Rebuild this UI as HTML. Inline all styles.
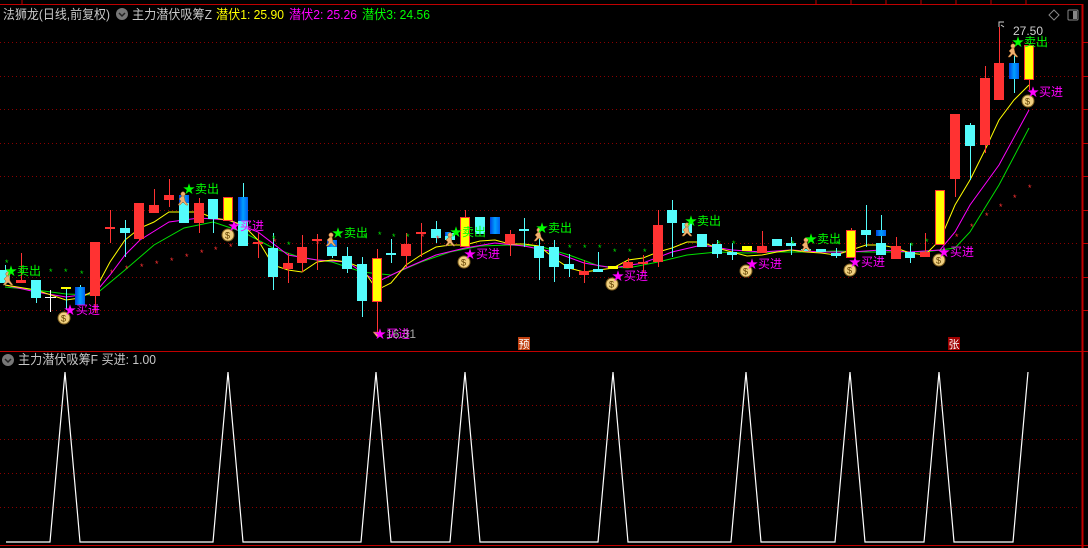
<!DOCTYPE html>
<html><head><meta charset="utf-8"><style>
html,body{margin:0;padding:0;background:#000;width:1088px;height:548px;overflow:hidden}
svg{display:block}
text{font-family:"Liberation Sans","Noto Sans CJK SC",sans-serif}
</style></head><body>
<svg width="1088" height="548" viewBox="0 0 1088 548" xmlns="http://www.w3.org/2000/svg">
<defs>
<linearGradient id="bl" x1="0" x2="1" y1="0" y2="0"><stop offset="0" stop-color="#0040e0"/><stop offset="0.5" stop-color="#00a0ff"/><stop offset="1" stop-color="#0060f0"/></linearGradient>
</defs>
<rect width="1088" height="548" fill="#000"/>
<line x1="0" y1="4.5" x2="1082" y2="4.5" stroke="#c00000" stroke-width="1"/>
<line x1="1082.5" y1="4" x2="1082.5" y2="548" stroke="#c00000" stroke-width="2"/>
<line x1="0" y1="351.5" x2="1088" y2="351.5" stroke="#c00000" stroke-width="1"/>
<line x1="0" y1="545.5" x2="1088" y2="545.5" stroke="#c00000" stroke-width="1"/>
<g stroke="#c00000" stroke-width="1">
<line x1="816" y1="0" x2="816" y2="4"/><line x1="851" y1="0" x2="851" y2="4"/><line x1="886" y1="0" x2="886" y2="4"/><line x1="921" y1="0" x2="921" y2="4"/><line x1="956" y1="0" x2="956" y2="4"/><line x1="991" y1="0" x2="991" y2="4"/><line x1="1026" y1="0" x2="1026" y2="4"/><line x1="22" y1="0" x2="22" y2="4"/>
</g>
<g stroke="#8a0000" stroke-width="1" stroke-dasharray="1,3">
<line x1="0" y1="42.5" x2="1080" y2="42.5"/><line x1="0" y1="76.5" x2="1080" y2="76.5"/><line x1="0" y1="109.5" x2="1080" y2="109.5"/><line x1="0" y1="143.5" x2="1080" y2="143.5"/><line x1="0" y1="176.5" x2="1080" y2="176.5"/><line x1="0" y1="210.5" x2="1080" y2="210.5"/><line x1="0" y1="243.5" x2="1080" y2="243.5"/><line x1="0" y1="277.5" x2="1080" y2="277.5"/><line x1="0" y1="310.5" x2="1080" y2="310.5"/>
<line x1="0" y1="405.5" x2="1080" y2="405.5"/><line x1="0" y1="439.5" x2="1080" y2="439.5"/><line x1="0" y1="473.5" x2="1080" y2="473.5"/><line x1="0" y1="507.5" x2="1080" y2="507.5"/>
</g>
<g stroke="#c00000" stroke-width="1">
<line x1="1082" y1="42.5" x2="1088" y2="42.5"/><line x1="1082" y1="76.5" x2="1088" y2="76.5"/><line x1="1082" y1="109.5" x2="1088" y2="109.5"/><line x1="1082" y1="143.5" x2="1088" y2="143.5"/><line x1="1082" y1="176.5" x2="1088" y2="176.5"/><line x1="1082" y1="210.5" x2="1088" y2="210.5"/><line x1="1082" y1="243.5" x2="1088" y2="243.5"/><line x1="1082" y1="277.5" x2="1088" y2="277.5"/><line x1="1082" y1="310.5" x2="1088" y2="310.5"/>
</g>
<text x="3" y="19" font-size="13" fill="#c8c8c8" textLength="107" lengthAdjust="spacingAndGlyphs">法狮龙(日线,前复权)</text>
<circle cx="122" cy="14" r="6" fill="#777"/><path d="M119 13 l3 3 l3 -3" stroke="#222" stroke-width="1.5" fill="none"/>
<text x="132" y="19" font-size="13" fill="#c8c8c8" textLength="80" lengthAdjust="spacingAndGlyphs">主力潜伏吸筹Z</text>
<text x="216" y="19" font-size="13" fill="#ffff00" textLength="68" lengthAdjust="spacingAndGlyphs">潜伏1: 25.90</text>
<text x="289" y="19" font-size="13" fill="#ff00ff" textLength="68" lengthAdjust="spacingAndGlyphs">潜伏2: 25.26</text>
<text x="362" y="19" font-size="13" fill="#00ff00" textLength="68" lengthAdjust="spacingAndGlyphs">潜伏3: 24.56</text>
<path d="M1054 10 l5 5 l-5 5 l-5 -5z" stroke="#888" fill="none"/>
<rect x="1068" y="10" width="10" height="10" rx="1" stroke="#888" fill="none"/><rect x="1073" y="11" width="4" height="8" fill="#888"/>
<polyline fill="none" stroke="#00e000" stroke-width="1" points="5,287 36,290 66,294 95,295 125,270 154,245 184,228 213,222 243,232 273,248 302,258 332,262 362,272 391,275 421,262 450,252 480,246 510,245 539,246 569,255 599,266 628,268 658,262 687,255 717,252 747,253 777,252 806,252 836,251 866,252 896,252 925,252 955,248 970,232 999,185 1029,128"/>
<polyline fill="none" stroke="#ff00ff" stroke-width="1" points="5,285 36,292 66,297 95,293 110,275 125,255 140,240 169,222 199,218 228,220 258,232 288,255 317,260 347,262 377,282 406,268 436,255 465,248 495,243 524,246 554,252 584,263 613,268 643,263 672,252 702,245 732,250 762,252 791,250 821,252 851,252 881,250 910,252 940,250 955,232 970,205 999,165 1029,110"/>
<polyline fill="none" stroke="#ffff00" stroke-width="1" points="5,285 36,290 66,300 80,298 95,290 110,262 125,240 140,228 154,222 169,212 184,212 199,212 213,218 228,220 243,225 258,240 273,265 288,270 302,272 317,262 332,260 347,262 362,268 377,290 391,283 406,265 421,255 436,247 450,245 465,245 480,241 495,240 510,244 524,244 539,246 554,258 569,268 584,272 599,270 613,268 628,260 643,258 658,252 672,248 687,242 702,242 717,248 732,252 747,256 762,255 777,252 791,250 806,252 821,253 836,255 851,250 866,245 881,245 896,248 910,253 925,255 940,240 955,205 970,180 985,150 999,120 1014,100 1029,85"/>
<g stroke-width="1">
<g stroke="#54fcfc">
<line x1="5.5" y1="265" x2="5.5" y2="285"/><line x1="36.5" y1="280" x2="36.5" y2="303"/><line x1="66.5" y1="287" x2="66.5" y2="310"/><line x1="80.5" y1="285" x2="80.5" y2="305"/>
<line x1="125.5" y1="220" x2="125.5" y2="257"/><line x1="184.5" y1="195" x2="184.5" y2="223"/><line x1="213.5" y1="199" x2="213.5" y2="233"/><line x1="243.5" y1="183" x2="243.5" y2="246"/>
<line x1="273.5" y1="233" x2="273.5" y2="290"/><line x1="332.5" y1="240" x2="332.5" y2="258"/><line x1="347.5" y1="247" x2="347.5" y2="273"/><line x1="362.5" y1="257" x2="362.5" y2="317"/>
<line x1="391.5" y1="239" x2="391.5" y2="263"/><line x1="436.5" y1="221" x2="436.5" y2="243"/><line x1="524.5" y1="218" x2="524.5" y2="247"/><line x1="539.5" y1="228" x2="539.5" y2="280"/>
<line x1="554.5" y1="240" x2="554.5" y2="282"/><line x1="569.5" y1="254" x2="569.5" y2="277"/><line x1="598.5" y1="252" x2="598.5" y2="272"/><line x1="672.5" y1="200" x2="672.5" y2="257"/>
<line x1="717.5" y1="240" x2="717.5" y2="258"/><line x1="732.5" y1="243" x2="732.5" y2="260"/><line x1="791.5" y1="237" x2="791.5" y2="255"/><line x1="836.5" y1="248" x2="836.5" y2="258"/>
<line x1="866.5" y1="205" x2="866.5" y2="247"/><line x1="881.5" y1="215" x2="881.5" y2="255"/><line x1="910.5" y1="243" x2="910.5" y2="263"/><line x1="970.5" y1="123" x2="970.5" y2="180"/><line x1="1014.5" y1="55" x2="1014.5" y2="93"/>
</g>
<g stroke="#ff3232">
<line x1="21.5" y1="253" x2="21.5" y2="283"/><line x1="95.5" y1="242" x2="95.5" y2="313"/><line x1="110.5" y1="210" x2="110.5" y2="243"/><line x1="139.5" y1="203" x2="139.5" y2="241"/>
<line x1="154.5" y1="189" x2="154.5" y2="213"/><line x1="169.5" y1="179" x2="169.5" y2="207"/><line x1="199.5" y1="198" x2="199.5" y2="233"/><line x1="258.5" y1="233" x2="258.5" y2="258"/>
<line x1="288.5" y1="253" x2="288.5" y2="283"/><line x1="302.5" y1="235" x2="302.5" y2="272"/><line x1="317.5" y1="234" x2="317.5" y2="270"/><line x1="377.5" y1="249" x2="377.5" y2="335"/>
<line x1="406.5" y1="233" x2="406.5" y2="267"/><line x1="421.5" y1="223" x2="421.5" y2="257"/><line x1="465.5" y1="210" x2="465.5" y2="247"/><line x1="510.5" y1="230" x2="510.5" y2="256"/>
<line x1="584.5" y1="260" x2="584.5" y2="283"/><line x1="628.5" y1="258" x2="628.5" y2="268"/><line x1="643.5" y1="255" x2="643.5" y2="272"/><line x1="658.5" y1="210" x2="658.5" y2="267"/>
<line x1="762.5" y1="231" x2="762.5" y2="253"/><line x1="851.5" y1="228" x2="851.5" y2="258"/><line x1="896.5" y1="237" x2="896.5" y2="259"/><line x1="925.5" y1="233" x2="925.5" y2="257"/>
<line x1="955.5" y1="114" x2="955.5" y2="197"/><line x1="985.5" y1="66" x2="985.5" y2="153"/><line x1="999.5" y1="27" x2="999.5" y2="100"/><line x1="1029.5" y1="45" x2="1029.5" y2="90"/>
</g>
<line x1="50.5" y1="290" x2="50.5" y2="312" stroke="#fff"/><line x1="45" y1="297.5" x2="56" y2="297.5" stroke="#fff"/>
</g>
<g fill="#54fcfc">
<rect x="0" y="270" width="10" height="13"/><rect x="31" y="280" width="10" height="18"/><rect x="120" y="228" width="10" height="5"/><rect x="179" y="200" width="10" height="23"/>
<rect x="208" y="199" width="10" height="20"/><rect x="238" y="221" width="10" height="25"/><rect x="268" y="248" width="10" height="29"/><rect x="327" y="247" width="10" height="9"/>
<rect x="342" y="256" width="10" height="13"/><rect x="357" y="264" width="10" height="37"/><rect x="386" y="253" width="10" height="2"/><rect x="431" y="229" width="10" height="9"/>
<rect x="445" y="233" width="10" height="7"/><rect x="475" y="217" width="10" height="17"/><rect x="519" y="229" width="10" height="2"/><rect x="534" y="246" width="10" height="12"/>
<rect x="549" y="247" width="10" height="20"/><rect x="564" y="264" width="10" height="5"/><rect x="593" y="269" width="10" height="3"/><rect x="667" y="210" width="10" height="13"/>
<rect x="682" y="223" width="10" height="10"/><rect x="697" y="234" width="10" height="13"/><rect x="712" y="244" width="10" height="10"/><rect x="727" y="252" width="10" height="3"/>
<rect x="772" y="239" width="10" height="7"/><rect x="786" y="243" width="10" height="3"/><rect x="801" y="249" width="10" height="2"/><rect x="816" y="249" width="10" height="3"/>
<rect x="831" y="253" width="10" height="3"/><rect x="861" y="230" width="10" height="5"/><rect x="876" y="243" width="10" height="12"/><rect x="905" y="252" width="10" height="6"/>
<rect x="965" y="125" width="10" height="21"/>
</g>
<g fill="#ff3232">
<rect x="16" y="280" width="10" height="3"/><rect x="90" y="242" width="10" height="54"/><rect x="105" y="227" width="10" height="2"/><rect x="134" y="203" width="10" height="36"/>
<rect x="149" y="205" width="10" height="8"/><rect x="164" y="195" width="10" height="5"/><rect x="194" y="203" width="10" height="20"/><rect x="253" y="242" width="10" height="2"/>
<rect x="283" y="263" width="10" height="6"/><rect x="297" y="247" width="10" height="16"/><rect x="312" y="239" width="10" height="2"/><rect x="401" y="244" width="10" height="12"/>
<rect x="416" y="232" width="10" height="2"/><rect x="505" y="234" width="10" height="10"/><rect x="579" y="271" width="10" height="4"/><rect x="623" y="262" width="10" height="6"/>
<rect x="638" y="262" width="10" height="2"/><rect x="653" y="225" width="10" height="37"/><rect x="757" y="246" width="10" height="7"/><rect x="891" y="246" width="10" height="13"/>
<rect x="920" y="252" width="10" height="5"/><rect x="950" y="114" width="10" height="65"/><rect x="980" y="78" width="10" height="67"/><rect x="994" y="63" width="10" height="37"/>
</g>
<g fill="#ffff00">
<rect x="61" y="287" width="10" height="2"/><rect x="608" y="266" width="10" height="3"/><rect x="742" y="246" width="10" height="5"/>
</g>
<g fill="#ffff00" stroke="#ff3232" stroke-width="1">
<rect x="223.5" y="197.5" width="9" height="23"/><rect x="372.5" y="258.5" width="9" height="43"/><rect x="460.5" y="217.5" width="9" height="29"/>
<rect x="846.5" y="230.5" width="9" height="27"/><rect x="935.5" y="190.5" width="9" height="54"/><rect x="1024.5" y="45.5" width="9" height="34"/>
</g>
<g fill="url(#bl)">
<rect x="75" y="287" width="10" height="18"/><rect x="179" y="195" width="10" height="8"/><rect x="238" y="197" width="10" height="24"/><rect x="490" y="217" width="10" height="17"/>
<rect x="876" y="230" width="10" height="6"/><rect x="1009" y="63" width="10" height="16"/><rect x="327" y="240" width="10" height="7"/><rect x="445" y="232" width="6" height="4"/>
</g>
<g font-size="9" fill="#00e000">
<text x="5" y="266">*</text><text x="20" y="276">*</text><text x="49" y="275">*</text><text x="64" y="275">*</text><text x="80" y="277">*</text>
<text x="272" y="242">*</text><text x="287" y="248">*</text><text x="363" y="240">*</text><text x="378" y="238">*</text><text x="392" y="240">*</text><text x="406" y="240">*</text>
<text x="568" y="251">*</text><text x="583" y="251">*</text><text x="598" y="251">*</text><text x="613" y="255">*</text><text x="628" y="255">*</text><text x="643" y="255">*</text>
<text x="717" y="247">*</text><text x="732" y="247">*</text><text x="791" y="247">*</text><text x="836" y="247">*</text><text x="910" y="249">*</text><text x="925" y="245">*</text>
</g>
<g font-size="9" fill="#ff3232">
<text x="95" y="285">*</text><text x="110" y="276">*</text><text x="125" y="272">*</text><text x="140" y="270">*</text><text x="155" y="267">*</text><text x="170" y="264">*</text><text x="185" y="260">*</text><text x="200" y="256">*</text><text x="214" y="253">*</text><text x="229" y="250">*</text>
<text x="258" y="248">*</text><text x="273" y="245">*</text><text x="316" y="247">*</text><text x="421" y="240">*</text><text x="436" y="242">*</text><text x="510" y="242">*</text><text x="658" y="250">*</text><text x="762" y="252">*</text>
<text x="955" y="240">*</text><text x="970" y="230">*</text><text x="985" y="219">*</text><text x="999" y="210">*</text><text x="1013" y="201">*</text><text x="1028" y="191">*</text>
</g>
<g fill="#f0b070" stroke="#a06020" stroke-width="0.5">
<g transform="translate(8,280)"><circle cx="0" cy="-6" r="2.2"/><path d="M-1 -4 L1 -4 L2 1 L5 5 L3 5 L0 2 L-3 5 L-5 5 L-2 1 L-4 -1 Z"/></g>
<g transform="translate(183,200)"><circle cx="0" cy="-6" r="2.2"/><path d="M-1 -4 L1 -4 L2 1 L5 5 L3 5 L0 2 L-3 5 L-5 5 L-2 1 L-4 -1 Z"/></g>
<g transform="translate(331,241)"><circle cx="0" cy="-6" r="2.2"/><path d="M-1 -4 L1 -4 L2 1 L5 5 L3 5 L0 2 L-3 5 L-5 5 L-2 1 L-4 -1 Z"/></g>
<g transform="translate(450,241)"><circle cx="0" cy="-6" r="2.2"/><path d="M-1 -4 L1 -4 L2 1 L5 5 L3 5 L0 2 L-3 5 L-5 5 L-2 1 L-4 -1 Z"/></g>
<g transform="translate(539,236)"><circle cx="0" cy="-6" r="2.2"/><path d="M-1 -4 L1 -4 L2 1 L5 5 L3 5 L0 2 L-3 5 L-5 5 L-2 1 L-4 -1 Z"/></g>
<g transform="translate(687,231)"><circle cx="0" cy="-6" r="2.2"/><path d="M-1 -4 L1 -4 L2 1 L5 5 L3 5 L0 2 L-3 5 L-5 5 L-2 1 L-4 -1 Z"/></g>
<g transform="translate(806,246)"><circle cx="0" cy="-6" r="2.2"/><path d="M-1 -4 L1 -4 L2 1 L5 5 L3 5 L0 2 L-3 5 L-5 5 L-2 1 L-4 -1 Z"/></g>
<g transform="translate(1013,52)"><circle cx="0" cy="-6" r="2.2"/><path d="M-1 -4 L1 -4 L2 1 L5 5 L3 5 L0 2 L-3 5 L-5 5 L-2 1 L-4 -1 Z"/></g>
<g transform="translate(377,334)"><path d="M-4 -2 L4 -2 L0 3 Z"/></g>
</g>
<g>
<g transform="translate(64,318)"><circle r="6" fill="#f0d080" stroke="#806020"/><text x="-3" y="3.5" font-size="9" fill="#604000">$</text></g>
<g transform="translate(228,235)"><circle r="6" fill="#f0d080" stroke="#806020"/><text x="-3" y="3.5" font-size="9" fill="#604000">$</text></g>
<g transform="translate(464,262)"><circle r="6" fill="#f0d080" stroke="#806020"/><text x="-3" y="3.5" font-size="9" fill="#604000">$</text></g>
<g transform="translate(612,284)"><circle r="6" fill="#f0d080" stroke="#806020"/><text x="-3" y="3.5" font-size="9" fill="#604000">$</text></g>
<g transform="translate(746,271)"><circle r="6" fill="#f0d080" stroke="#806020"/><text x="-3" y="3.5" font-size="9" fill="#604000">$</text></g>
<g transform="translate(850,270)"><circle r="6" fill="#f0d080" stroke="#806020"/><text x="-3" y="3.5" font-size="9" fill="#604000">$</text></g>
<g transform="translate(939,260)"><circle r="6" fill="#f0d080" stroke="#806020"/><text x="-3" y="3.5" font-size="9" fill="#604000">$</text></g>
<g transform="translate(1028,101)"><circle r="6" fill="#f0d080" stroke="#806020"/><text x="-3" y="3.5" font-size="9" fill="#604000">$</text></g>
</g>
<g font-size="12" fill="#00ff00">
<text x="5" y="275">★卖出</text><text x="183" y="193">★卖出</text><text x="332" y="237">★卖出</text><text x="450" y="236">★卖出</text>
<text x="536" y="232">★卖出</text><text x="685" y="225">★卖出</text><text x="805" y="243">★卖出</text><text x="1012" y="46">★卖出</text>
</g>
<g font-size="12" fill="#ff00ff">
<text x="64" y="314">★买进</text><text x="228" y="230">★买进</text><text x="374" y="338">★买进</text><text x="464" y="258">★买进</text>
<text x="612" y="280">★买进</text><text x="746" y="268">★买进</text><text x="849" y="266">★买进</text><text x="938" y="256">★买进</text><text x="1027" y="96">★买进</text>
</g>
<text x="386" y="338" font-size="12" fill="#aaaaaa">16.31</text>
<text x="1013" y="35" font-size="12" fill="#d0d0d0">27.50</text>
<path d="M999 27 L999 22 L1004 22 M1001 25 l3 2" stroke="#d0d0d0" fill="none"/>
<rect x="518" y="337" width="12" height="13" fill="#c04010"/><text x="518.5" y="348" font-size="11" fill="#fff">预</text>
<rect x="948" y="337" width="12" height="13" fill="#a00000"/><text x="948.5" y="348" font-size="11" fill="#fff">张</text>
<circle cx="8" cy="360" r="6" fill="#777"/><path d="M5 359 l3 3 l3 -3" stroke="#222" stroke-width="1.5" fill="none"/>
<text x="18" y="364" font-size="13" fill="#c8c8c8" textLength="138" lengthAdjust="spacingAndGlyphs">主力潜伏吸筹F 买进: 1.00</text>
<polyline fill="none" stroke="#ffffff" stroke-width="1.2" points="6,542 50,542 65,372 80,542 213,542 228,372 243,542 361,542 376,372 391,542 450,542 465,372 480,542 598,542 613,372 628,542 731,542 746,372 761,542 835,542 850,372 865,542 924,542 939,372 954,542 1013,542 1028,372"/>
</svg>
</body></html>
